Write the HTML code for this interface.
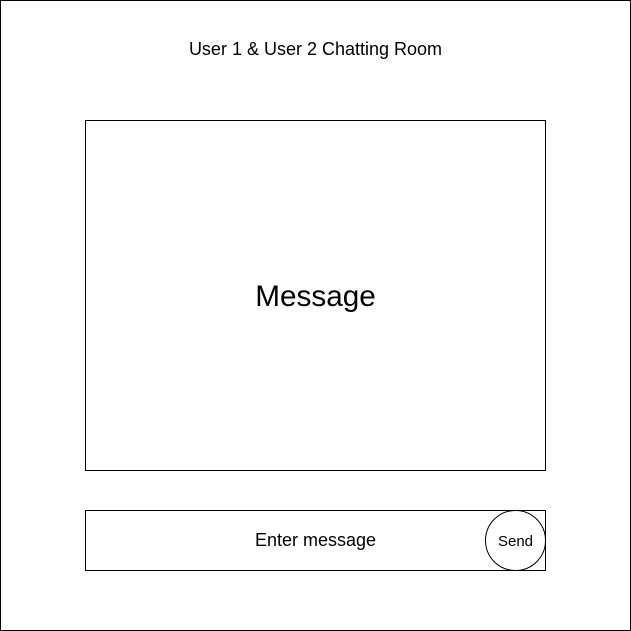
<!DOCTYPE html>
<html><head><meta charset="utf-8"><style>
html,body{margin:0;padding:0;background:#fff;}
body{width:631px;height:631px;position:relative;overflow:hidden;font-family:"Liberation Sans",Arial,sans-serif;color:#000;}
.outer{position:absolute;left:0;top:0;width:629px;height:629px;border:1px solid #000;}
.title{position:absolute;left:0;width:631px;top:39px;text-align:center;font-size:18px;}
.msg{position:absolute;left:85px;top:120px;width:459px;height:347px;padding-top:2px;border:1px solid #000;display:flex;align-items:center;justify-content:center;font-size:29.7px;}
.inp{position:absolute;left:85px;top:510px;width:459px;height:59px;border:1px solid #000;display:flex;align-items:center;justify-content:center;font-size:18px;}
.send{position:absolute;left:485px;top:510px;width:59px;height:58px;padding-top:1px;border:1px solid #000;border-radius:50%;background:#fff;display:flex;align-items:center;justify-content:center;font-size:15px;}
</style></head><body>
<div class="outer"></div>
<div class="title">User 1 &amp; User 2 Chatting Room</div>
<div class="msg">Message</div>
<div class="inp">Enter message</div>
<div class="send">Send</div>
</body></html>
